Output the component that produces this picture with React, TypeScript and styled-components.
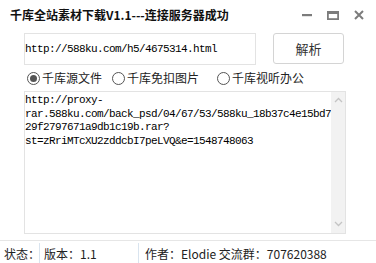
import React from 'react';
import styled, { createGlobalStyle } from 'styled-components';

const Global = createGlobalStyle`
  html, body { margin: 0; padding: 0; background: #fff; }
  #root { width: 376px; height: 263px; }
`;

const Window = styled.div`
  width: 376px;
  height: 263px;
  background: #fff;
  display: flex;
  flex-direction: column;
  font-family: "Noto Sans CJK SC", sans-serif;
  color: #222;
  overflow: hidden;
`;

const TitleBar = styled.div`
  height: 30px;
  flex: none;
  display: flex;
  align-items: center;
  justify-content: space-between;
  padding: 0 4px 0 10px;
`;

const Title = styled.div`
  font-size: 12px;
  font-weight: bold;
  color: #111;
  line-height: 1;
`;

const Controls = styled.div`
  display: flex;
  align-items: center;
  height: 30px;
`;

const CtrlBtn = styled.div`
  width: 26px;
  height: 30px;
  display: flex;
  align-items: center;
  justify-content: center;
  color: #7c7c7c;
`;

const Body = styled.div`
  padding: 3px 30px 0 24px;
  display: flex;
  flex-direction: column;
`;

const UrlRow = styled.div`
  display: flex;
  align-items: flex-start;
  gap: 17px;
  height: 32px;
`;

const UrlInput = styled.div`
  width: 232px;
  height: 32px;
  box-sizing: border-box;
  border: 1px solid #e3e3e3;
  display: flex;
  align-items: center;
  padding-left: 0;
  font-family: "Liberation Mono", monospace;
  font-size: 11px;
  letter-spacing: -0.6px;
  color: #000;
`;

const Button = styled.button`
  width: 71px;
  height: 31px;
  box-sizing: border-box;
  border: 1px solid #d4d4d4;
  border-radius: 3px;
  background: #fff;
  font-family: "Noto Sans CJK SC", sans-serif;
  font-size: 13px;
  color: #333;
  padding: 0;
`;

const RadioRow = styled.div`
  height: 26px;
  display: flex;
  align-items: center;
  padding-left: 3px;
`;

const RadioItem = styled.label<{ $w?: number }>`
  display: flex;
  align-items: center;
  gap: 2px;
  width: ${(p) => (p.$w ? `${p.$w}px` : 'auto')};
  font-size: 12px;
  color: #222;
  line-height: 1;
`;

const RadioCircle = styled.span<{ $on?: boolean }>`
  width: 13px;
  height: 13px;
  box-sizing: border-box;
  border: 1px solid #555;
  border-radius: 50%;
  display: flex;
  align-items: center;
  justify-content: center;
  &::after {
    content: '';
    width: 7px;
    height: 7px;
    border-radius: 50%;
    background: ${(p) => (p.$on ? '#555' : 'transparent')};
  }
`;

const Output = styled.div`
  width: 322px;
  height: 143px;
  box-sizing: border-box;
  border: 1px solid #e3e3e3;
  display: flex;
`;

const OutputText = styled.div`
  flex: 1;
  padding: 2px 0 0 0;
  white-space: pre;
  font-family: "Liberation Mono", monospace;
  font-size: 11px;
  letter-spacing: -0.6px;
  line-height: 13.5px;
  color: #000;
`;

const ScrollBar = styled.div`
  width: 14px;
  background: #f2f2f2;
  display: flex;
  flex-direction: column;
  justify-content: space-between;
  align-items: center;
  padding: 5px 0 6px;
  color: #c4c4c4;
`;

const StatusBar = styled.div`
  margin-top: auto;
  height: 22px;
  border-top: 1px solid #e6e6e6;
  display: flex;
  align-items: stretch;
  font-size: 12px;
  color: #222;
`;

const StatusCell = styled.div<{ $w?: number; $pl: number; $sep?: boolean }>`
  width: ${(p) => (p.$w ? `${p.$w}px` : 'auto')};
  flex: ${(p) => (p.$w ? 'none' : '1')};
  box-sizing: border-box;
  padding-left: ${(p) => p.$pl}px;
  margin-top: 2px;
  display: flex;
  align-items: center;
  border-right: ${(p) => (p.$sep ? '1px solid #d9e4ef' : 'none')};
  white-space: nowrap;
`;

const Chevron = ({ up }: { up?: boolean }) => (
  <svg width="9" height="6" viewBox="0 0 9 6">
    <path
      d={up ? 'M1 5 L4.5 1.5 L8 5' : 'M1 1 L4.5 4.5 L8 1'}
      fill="none"
      stroke="currentColor"
      strokeWidth="1.3"
    />
  </svg>
);

const url =
  'http://proxy-\nrar.588ku.com/back_psd/04/67/53/588ku_18b37c4e15bd7\n29f2797671a9db1c19b.rar?\nst=zRriMTcXU2zddcbI7peLVQ&e=1548748063';

export default function App() {
  return (
    <>
      <Global />
      <Window>
        <TitleBar>
          <Title>千库全站素材下载V1.1---连接服务器成功</Title>
          <Controls>
            <CtrlBtn>
              <svg width="10" height="10" viewBox="0 0 10 10">
                <rect x="0" y="4" width="10" height="2.2" fill="currentColor" />
              </svg>
            </CtrlBtn>
            <CtrlBtn>
              <svg width="12" height="9" viewBox="0 0 12 9">
                <rect x="0.9" y="1.4" width="10.2" height="6.7" fill="none" stroke="currentColor" strokeWidth="1.8" />
                <rect x="0" y="0" width="12" height="3" fill="currentColor" />
              </svg>
            </CtrlBtn>
            <CtrlBtn>
              <svg width="10" height="10" viewBox="0 0 10 10">
                <path d="M1 1 L9 9 M9 1 L1 9" stroke="currentColor" strokeWidth="2" />
              </svg>
            </CtrlBtn>
          </Controls>
        </TitleBar>
        <Body>
          <UrlRow>
            <UrlInput>http://588ku.com/h5/4675314.html</UrlInput>
            <Button>解析</Button>
          </UrlRow>
          <RadioRow>
            <RadioItem $w={85}>
              <RadioCircle $on />
              千库源文件
            </RadioItem>
            <RadioItem $w={105}>
              <RadioCircle />
              千库免扣图片
            </RadioItem>
            <RadioItem>
              <RadioCircle />
              千库视听办公
            </RadioItem>
          </RadioRow>
          <Output>
            <OutputText>{url}</OutputText>
            <ScrollBar>
              <Chevron up />
              <Chevron />
            </ScrollBar>
          </Output>
        </Body>
        <StatusBar>
          <StatusCell $w={40} $pl={4} $sep>
            状态：
          </StatusCell>
          <StatusCell $w={99} $pl={4} $sep>
            版本：1.1
          </StatusCell>
          <StatusCell $pl={6}>作者：Elodie 交流群：707620388</StatusCell>
        </StatusBar>
      </Window>
    </>
  );
}
